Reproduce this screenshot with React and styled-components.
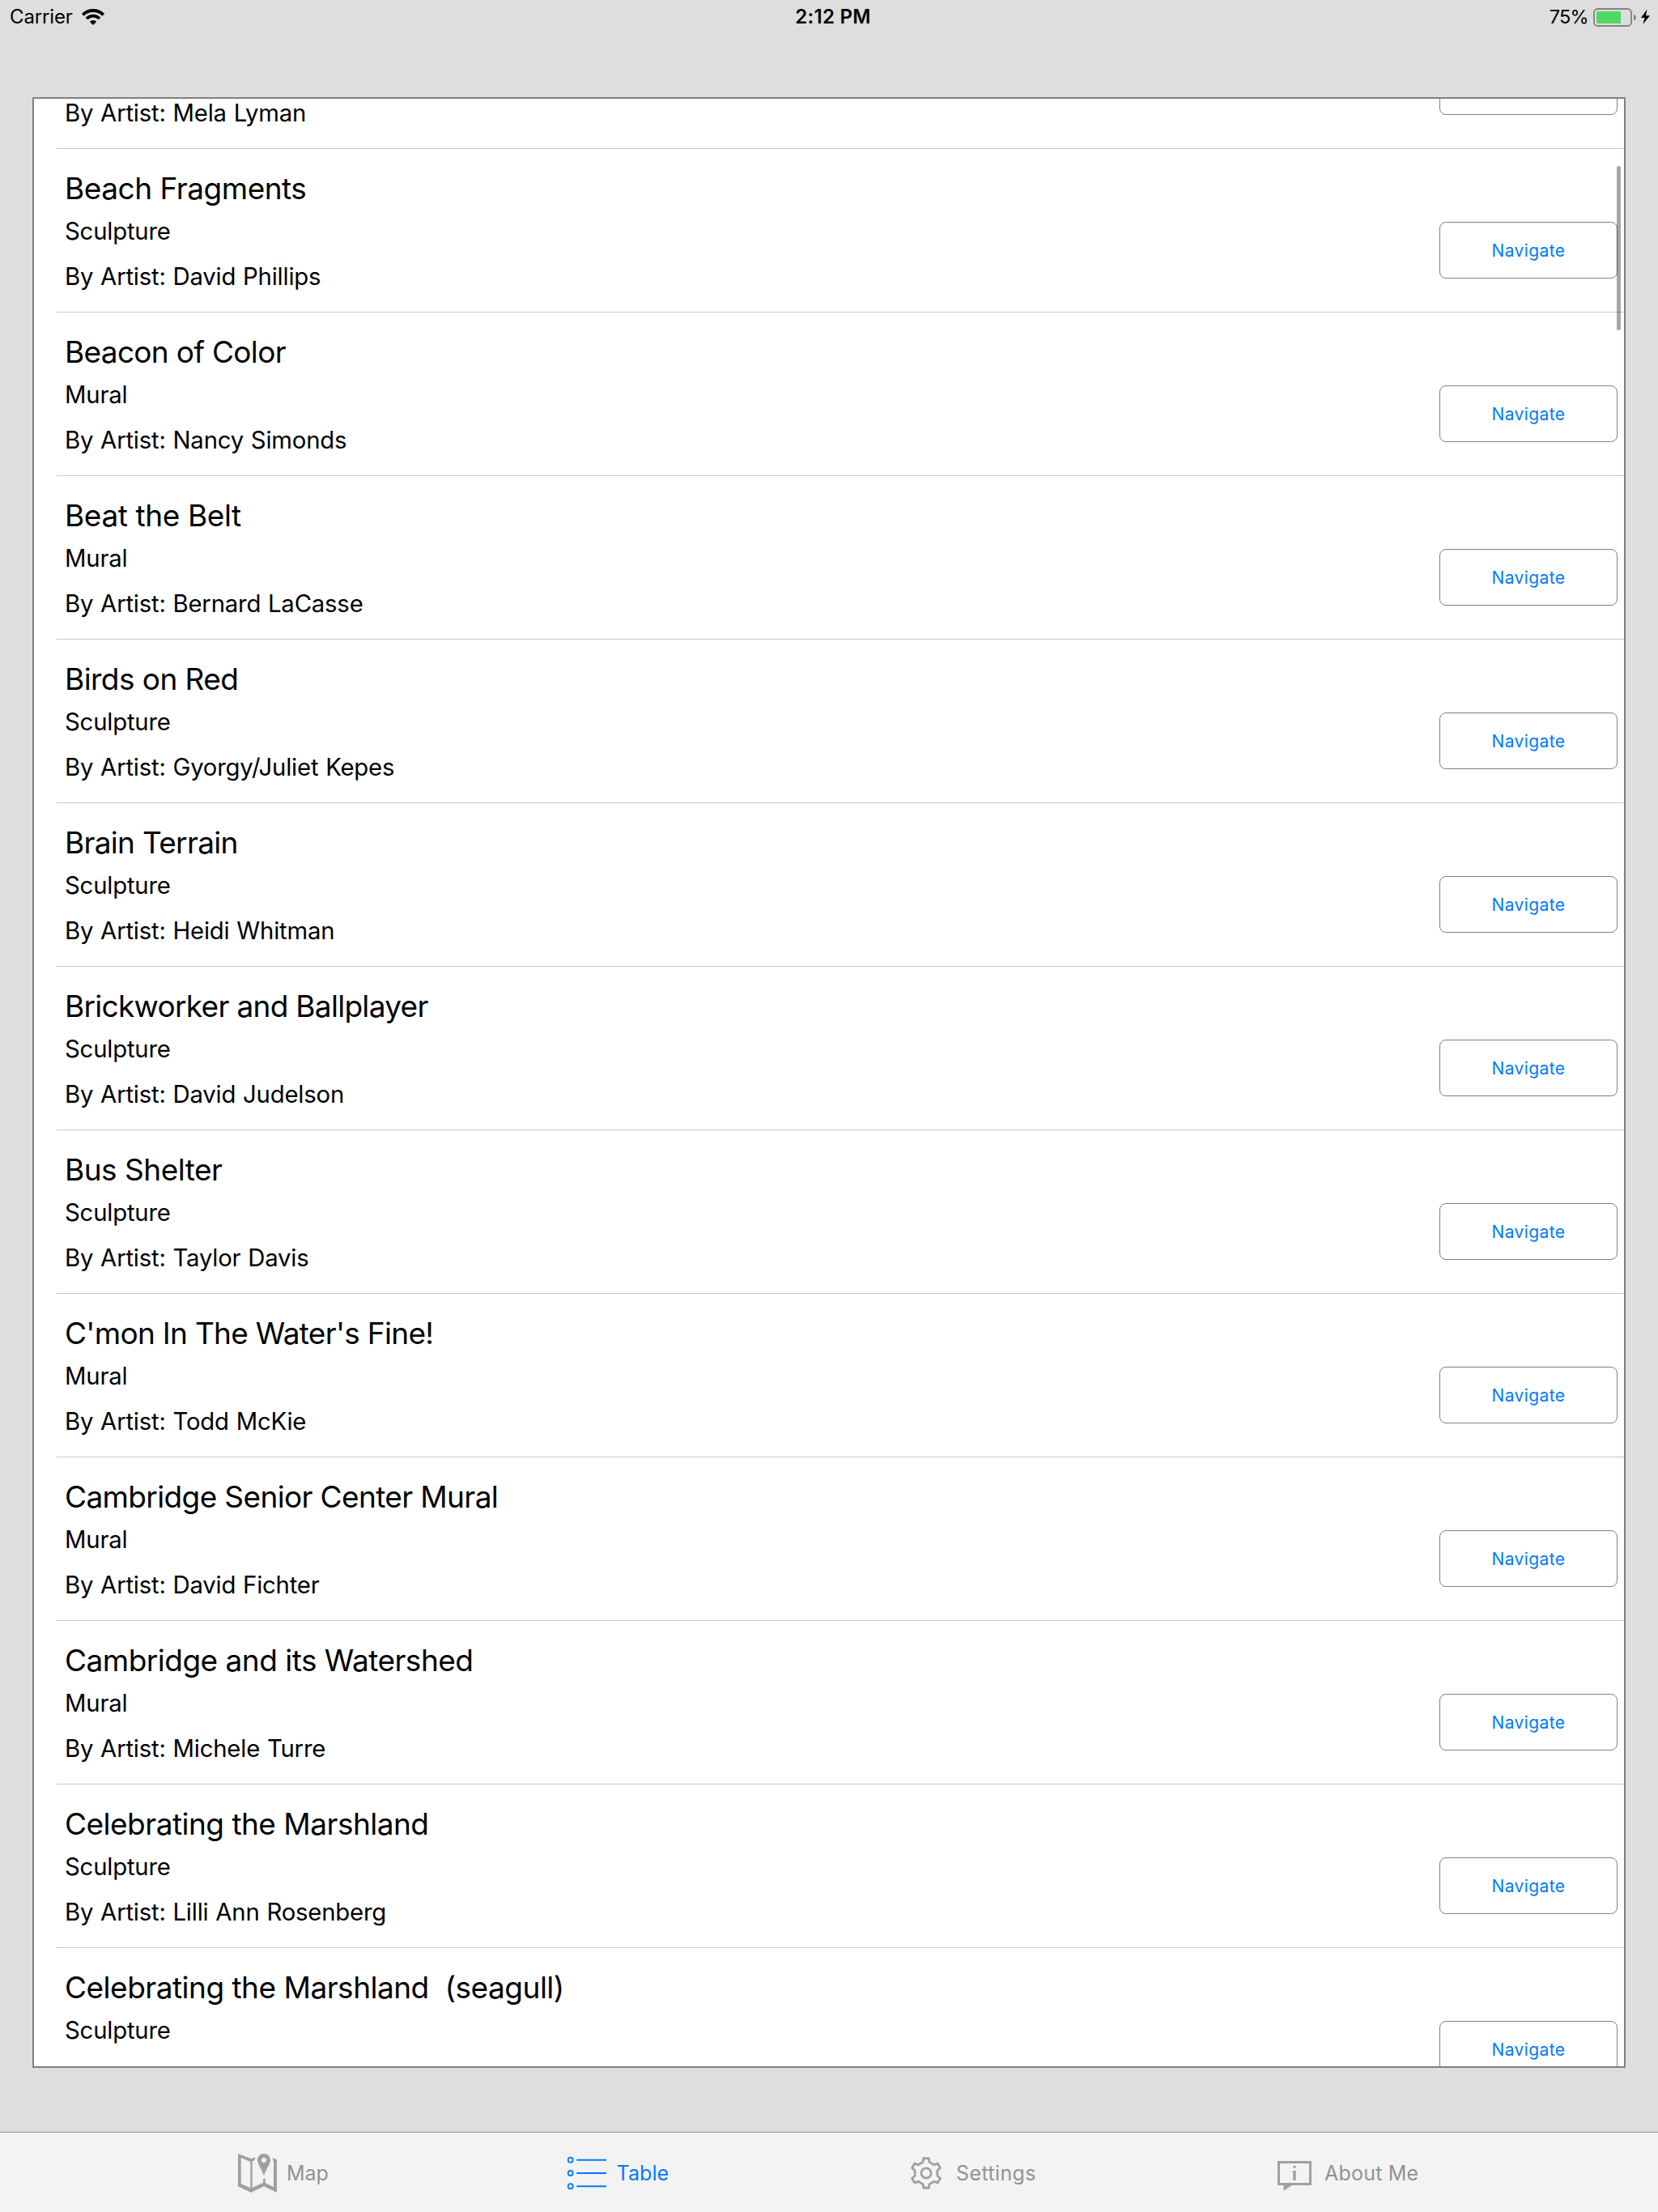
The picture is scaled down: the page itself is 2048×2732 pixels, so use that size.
import React from "react";
import styled, { createGlobalStyle } from "styled-components";

const GlobalStyle = createGlobalStyle`
  * { box-sizing: border-box; }
  body { margin: 0; background: #dedede; }
`;

const Screen = styled.div`
  display: flex;
  flex-direction: column;
  width: 2048px;
  height: 2732px;
  background: #dedede;
  color: #000;
  font-family: Inter, "Liberation Sans", sans-serif;
  overflow: hidden;
`;

const StatusBar = styled.header`
  display: grid;
  grid-template-columns: 1fr auto 1fr;
  align-items: center;
  height: 40px;
  padding: 0 10px 0 12px;
  font-size: 24px;
  line-height: 40px;
`;

const StatusGroup = styled.div`
  display: flex;
  align-items: center;
  justify-content: ${(p) => (p.$end ? "flex-end" : "flex-start")};
  height: 40px;
`;

const Carrier = styled.span`
  width: 88px;
  padding-top: 1px;
  letter-spacing: -0.15px;
`;

const Clock = styled.span`
  padding: 1px 0 0 8px;
  font-weight: 600;
  font-size: 24px;
  letter-spacing: 0.3px;
`;

const Percent = styled.span`
  margin-right: 6px;
  padding-top: 1px;
  font-size: 23.5px;
  letter-spacing: -0.7px;
`;

const Glyph = styled.svg`
  display: block;
  flex: none;
`;

const Panel = styled.main`
  position: relative;
  flex: none;
  width: 1968px;
  height: 2434px;
  margin: 80px 40px 79px;
  border: 2px solid #808080;
  background: #fff;
  overflow: hidden;
`;

const List = styled.ul`
  margin: -140px 0 0;
  padding: 0 0 0 28px;
  list-style: none;
`;

const Row = styled.li`
  display: flex;
  justify-content: space-between;
  height: 202px;
  padding: 0 8px 0 10px;
  border-bottom: 1px solid #c8c7c9;
`;

const Details = styled.div`
  display: flex;
  flex-direction: column;
  padding-top: 24px;
  white-space: pre;
`;

const Title = styled.div`
  height: 50px;
  font-size: 37px;
  line-height: 50px;
  letter-spacing: ${(p) => p.$tracking}px;
`;

const Line = styled.div`
  height: 56px;
  font-size: 29.3px;
  line-height: 56px;
  letter-spacing: -0.19px;
  word-spacing: 0.8px;
`;

const NavigateButton = styled.button`
  width: 220px;
  height: 70px;
  margin-top: 90px;
  padding: 0;
  border: 1px solid #808080;
  border-radius: 8px;
  background: transparent;
  color: #007aff;
  font-family: inherit;
  font-size: 21px;
  letter-spacing: 0.4px;
`;

const ScrollThumb = styled.div`
  position: absolute;
  top: 83px;
  right: 4px;
  width: 5px;
  height: 203px;
  border-radius: 3px;
  background: rgba(0, 0, 0, 0.35);
`;

const TabBar = styled.nav`
  display: flex;
  flex: none;
  height: 99px;
  padding-left: 293px;
  border-top: 1px solid #999;
  background: #f3f3f3;
`;

const Tab = styled.div`
  display: flex;
  align-items: center;
  width: ${(p) => p.$width}px;
  height: 100px;
  color: ${(p) => (p.$active ? "#007aff" : "#929292")};
`;

const TabLabel = styled.span`
  margin-left: ${(p) => p.$gap}px;
  font-size: 25px;
  line-height: 40px;
  letter-spacing: ${(p) => p.$spacing || 0}px;
  white-space: nowrap;
`;

const WifiIcon = () => (
  <Glyph width="30" height="22" viewBox="0 0 30 22">
    <g fill="none" stroke="#000">
      <path strokeWidth="4" d="M2.3 8.3A18 18 0 0 1 27.7 8.3" />
      <path strokeWidth="3.8" d="M7 13A11.3 11.3 0 0 1 23 13" />
    </g>
    <path d="M15 21L10.8 16.8A6 6 0 0 1 19.2 16.8Z" />
  </Glyph>
);

const BatteryIcon = () => (
  <Glyph width="70" height="26" viewBox="0 -2 70 26">
    <rect x="1" y="1" width="46" height="21" rx="4.5" fill="none" stroke="#848484" strokeWidth="1.9" />
    <path d="M6 4H34V19H6Q4 19 4 17V6Q4 4 6 4Z" fill="#4cd964" />
    <path d="M50 7.6Q53 9 53 11.6T50 15.6Z" fill="#848484" />
    <path d="M66.5 1.5L59 12.1H63.6L61.3 20L70 9.2H65Z" fill="#000" />
  </Glyph>
);

const MapIcon = () => (
  <Glyph width="50" height="50" viewBox="0 0 50 50" fill="#a0a0a0">
    <path
      fillRule="evenodd"
      d="M1 1L17.3 7.2L22.3 5.2L21.5 9L18.7 10.3V42.8L32 37V32.8L34.7 31.3V37L45 42.3V10L44 9.5V6.3L49 8.3V49L33 41.3L17 49L1 41.3ZM4.7 6V38L16.3 43.3V11Z"
    />
    <path
      fillRule="evenodd"
      d="M33 1C28.4 1 25 4.4 25 8.8C25 14.5 29.8 18.5 33 28C36.2 18.5 41 14.5 41 8.8C41 4.4 37.6 1 33 1ZM33 6A3 3 0 1 1 33 12A3 3 0 1 1 33 6Z"
    />
  </Glyph>
);

const TableIcon = () => (
  <Glyph width="50" height="42" viewBox="0 0 50 42" fill="none" stroke="#007aff">
    {[4.7, 21, 37.2].map((y) => (
      <g key={y}>
        <circle cx="4.7" cy={y} r="3" strokeWidth="1.8" />
        <path d={`M12.2 ${y}H49`} strokeWidth="2" />
      </g>
    ))}
  </Glyph>
);

const gearPoints = [0, 60, 120, 180, 240, 300]
  .flatMap((turn) =>
    [
      [14.2, -17],
      [18.5, -9.6],
      [18.5, 9.6],
      [14.2, 17],
    ].map(([r, offset]) => {
      const a = ((turn + offset) * Math.PI) / 180;
      return `${(20 + r * Math.sin(a)).toFixed(2)},${(20 - r * Math.cos(a)).toFixed(2)}`;
    })
  )
  .join(" ");

const GearIcon = () => (
  <Glyph width="40" height="40" viewBox="0 0 40 40" fill="none" stroke="#a0a0a0" strokeWidth="2.8">
    <polygon points={gearPoints} />
    <circle cx="20" cy="20" r="6.1" />
  </Glyph>
);

const AboutIcon = () => (
  <Glyph width="42" height="42" viewBox="0 0 42 42" fill="#a0a0a0">
    <path fillRule="evenodd" d="M0 6H42V36H17.5L7.5 43V36H0ZM3 9V33H39V9Z" />
    <path d="M19.3 12H22.7V14.6H19.3ZM18.8 18H22.7V30H19.3V19.6H18.8Z" />
  </Glyph>
);

const artworks = [
  { artist: "Mela Lyman", scrolledOff: true },
  { title: "Beach Fragments", tracking: -0.48, kind: "Sculpture", artist: "David Phillips" },
  { title: "Beacon of Color", tracking: -0.68, kind: "Mural", artist: "Nancy Simonds" },
  { title: "Beat the Belt", tracking: -0.38, kind: "Mural", artist: "Bernard LaCasse" },
  { title: "Birds on Red", tracking: -0.55, kind: "Sculpture", artist: "Gyorgy/Juliet Kepes" },
  { title: "Brain Terrain", tracking: -0.7, kind: "Sculpture", artist: "Heidi Whitman" },
  { title: "Brickworker and Ballplayer", tracking: -0.7, kind: "Sculpture", artist: "David Judelson" },
  { title: "Bus Shelter", tracking: -0.5, kind: "Sculpture", artist: "Taylor Davis" },
  { title: "C'mon In The Water's Fine!", tracking: -0.7, kind: "Mural", artist: "Todd McKie" },
  { title: "Cambridge Senior Center Mural", tracking: -0.63, kind: "Mural", artist: "David Fichter" },
  { title: "Cambridge and its Watershed", tracking: -0.51, kind: "Mural", artist: "Michele Turre" },
  { title: "Celebrating the Marshland", tracking: -0.51, kind: "Sculpture", artist: "Lilli Ann Rosenberg" },
  { title: "Celebrating the Marshland  (seagull)", tracking: -0.5, kind: "Sculpture", artist: "Lilli Ann Rosenberg" },
];

export default function App() {
  return (
    <Screen>
      <GlobalStyle />
      <StatusBar>
        <StatusGroup>
          <Carrier>Carrier</Carrier>
          <WifiIcon />
        </StatusGroup>
        <Clock>2:12 PM</Clock>
        <StatusGroup $end>
          <Percent>75%</Percent>
          <BatteryIcon />
        </StatusGroup>
      </StatusBar>
      <Panel>
        <List>
          {artworks.map(({ title, tracking, kind, artist, scrolledOff }, i) => (
            <Row key={i}>
              <Details>
                <Title $tracking={tracking || 0}>{title}</Title>
                <Line>{kind}</Line>
                <Line>{`By Artist: ${artist}`}</Line>
              </Details>
              <NavigateButton>{scrolledOff ? null : "Navigate"}</NavigateButton>
            </Row>
          ))}
        </List>
        <ScrollThumb />
      </Panel>
      <TabBar>
        <Tab $width={407}>
          <MapIcon />
          <TabLabel $gap={11}>Map</TabLabel>
        </Tab>
        <Tab $width={424} $active>
          <TableIcon />
          <TabLabel $gap={11.5} $spacing={0.1}>Table</TabLabel>
        </Tab>
        <Tab $width={454}>
          <GearIcon />
          <TabLabel $gap={17} $spacing={0.4}>Settings</TabLabel>
        </Tab>
        <Tab $width={200}>
          <AboutIcon />
          <TabLabel $gap={16} $spacing={0.2}>About Me</TabLabel>
        </Tab>
      </TabBar>
    </Screen>
  );
}
